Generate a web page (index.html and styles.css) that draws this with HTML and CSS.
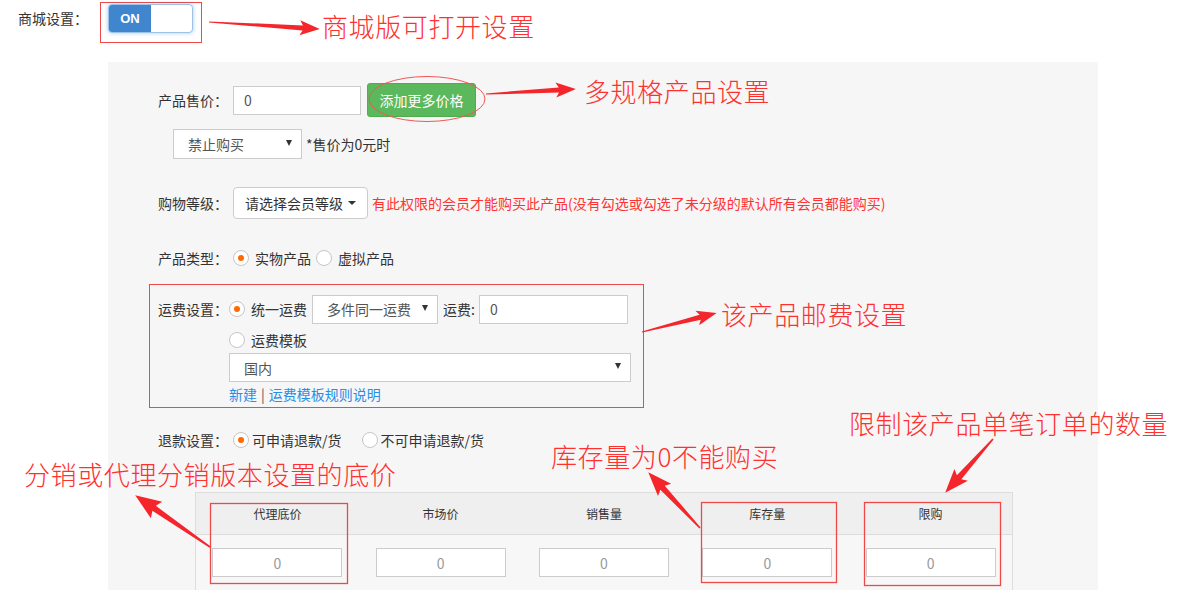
FILE: index.html
```html
<!DOCTYPE html>
<html lang="zh-CN">
<head>
<meta charset="UTF-8">
<meta name="viewport" content="width=device-width, initial-scale=1.0">
<title>商品设置</title>
<link rel="stylesheet" href="styles.css">
</head>
<body>
<div class="page">

  <div class="mall-row">
    <span class="mall-label">商城设置：</span>
    <div class="toggle-frame">
      <div class="switch"><span class="switch-on">ON</span><span class="switch-off"></span></div>
    </div>
  </div>

  <div class="panel">
    <div class="row price-row">
      <span class="field-label">产品售价：</span>
      <div class="text-input price-input">0</div>
      <div class="btn-green">添加更多价格</div>
    </div>

    <div class="row zero-row">
      <div class="fake-select zero-select"><span>禁止购买</span><i class="tri"></i></div>
      <span class="zero-note">*售价为0元时</span>
    </div>

    <div class="row level-row">
      <span class="field-label">购物等级：</span>
      <div class="level-btn">请选择会员等级 <i class="caret"></i></div>
      <span class="hint">有此权限的会员才能购买此产品(没有勾选或勾选了未分级的默认所有会员都能购买)</span>
    </div>

    <div class="row type-row">
      <span class="field-label">产品类型：</span>
      <span class="radio checked"></span><span class="opt">实物产品</span>
      <span class="radio"></span><span class="opt">虚拟产品</span>
    </div>

    <div class="ship-box">
      <div class="ship-line ship-first">
        <span class="ship-label">运费设置：</span>
        <span class="radio checked"></span><span class="opt">统一运费</span>
        <div class="fake-select fee-select"><span>多件同一运费</span><i class="tri"></i></div>
        <span class="fee-label">运费:</span>
        <div class="text-input fee-input">0</div>
      </div>
      <div class="ship-line ship-indent ship-second">
        <span class="radio"></span><span class="opt">运费模板</span>
      </div>
      <div class="ship-line ship-indent ship-third">
        <div class="fake-select tpl-select"><span>国内</span><i class="tri"></i></div>
      </div>
      <div class="ship-line ship-indent ship-links">
        <a href="#" class="link">新建</a><span class="sep">|</span><a href="#" class="link">运费模板规则说明</a>
      </div>
    </div>

    <div class="row refund-row">
      <span class="field-label">退款设置：</span>
      <span class="radio checked tight"></span><span class="opt wide">可申请退款/货</span>
      <span class="radio tight"></span><span class="opt">不可申请退款/货</span>
    </div>

    <table class="spec-table">
      <thead>
        <tr><th>代理底价</th><th>市场价</th><th>销售量</th><th>库存量</th><th>限购</th></tr>
      </thead>
      <tbody>
        <tr>
          <td><div class="cell-input">0</div></td>
          <td><div class="cell-input">0</div></td>
          <td><div class="cell-input">0</div></td>
          <td><div class="cell-input">0</div></td>
          <td><div class="cell-input">0</div></td>
        </tr>
      </tbody>
    </table>
  </div>

  <!-- annotation marks drawn over the form -->
  <svg class="marks" width="1200" height="598" viewBox="0 0 1200 598">
    <ellipse cx="427" cy="99" rx="58" ry="22.5" fill="none" stroke="#f25656" stroke-width="1"/>
    <rect x="210.5" y="503.5" width="137" height="80" fill="none" stroke="#f04848" stroke-width="1.3"/>
    <rect x="701.5" y="502.5" width="135" height="80" fill="none" stroke="#f04848" stroke-width="1.3"/>
    <rect x="864.5" y="502.5" width="136" height="83" fill="none" stroke="#f04848" stroke-width="1.3"/>
    <g fill="#f5262b">
      <polygon transform="translate(209 22) rotate(3.6)" points="0,-0.6 94,-2.5 91,-7.5 111,0 91,7.5 94,2.5 0,0.6"/>
      <polygon transform="translate(486 94) rotate(-3.2)" points="0,-0.6 73,-2.5 70,-7.5 90,0 70,7.5 73,2.5 0,0.6"/>
      <polygon transform="translate(642 332) rotate(-14.2)" points="0,-0.6 60,-2.5 57,-7.5 77,0 57,7.5 60,2.5 0,0.6"/>
      <polygon transform="translate(210 547) rotate(-145.3)" points="0,-0.8 68,-3 65,-10 91,0 65,10 68,3 0,0.8"/>
      <polygon transform="translate(700 528) rotate(-132.9)" points="0,-0.8 55,-3 52,-9 76,0 52,9 55,3 0,0.8"/>
      <polygon transform="translate(993 439) rotate(131.6)" points="0,-0.8 51,-3 48,-9 72,0 48,9 51,3 0,0.8"/>
    </g>
  </svg>

  <span class="note note-mall">商城版可打开设置</span>
  <span class="note note-spec">多规格产品设置</span>
  <span class="note note-ship">该产品邮费设置</span>
  <span class="note note-agent">分销或代理分销版本设置的底价</span>
  <span class="note note-stock">库存量为0不能购买</span>
  <span class="note note-limit">限制该产品单笔订单的数量</span>
</div>
</body>
</html>
```

FILE: styles.css
```css
body {
  margin: 0;
  font-family: "Noto Sans CJK SC", "Microsoft YaHei", sans-serif;
  font-size: 14px;
  color: #333;
  background: #fff;
}

.page {
  position: relative;
  width: 1200px;
  height: 598px;
  overflow: hidden;
}

/* top switch */
.mall-row {
  display: flex;
  align-items: flex-start;
  height: 62px;
  padding-left: 18px;
}

.mall-label {
  width: 82px;
  line-height: 20px;
  margin-top: 8px;
}

.toggle-frame {
  margin-top: 2px;
  border: 1px solid #f04848;
  padding: 1px 8px 9px 7px;
}

.switch {
  display: flex;
  width: 85px;
  height: 29px;
  box-sizing: border-box;
  border: 1px solid #9cc2ea;
  border-radius: 4px;
  overflow: hidden;
  background: #fff;
  box-shadow: 0 0 4px rgba(66, 139, 202, 0.45);
}

.switch-on {
  width: 42px;
  background: #3f86cf;
  color: #fff;
  font-family: "Liberation Sans", Arial, sans-serif;
  font-weight: bold;
  font-size: 13px;
  display: flex;
  align-items: center;
  justify-content: center;
}

/* grey panel */
.panel {
  margin-left: 108px;
  width: 990px;
  height: 528px;
  box-sizing: border-box;
  padding-top: 21px;
  background: #f6f6f6;
  overflow: hidden;
}

.row {
  display: flex;
  align-items: center;
  padding-left: 50px;
  white-space: nowrap;
}

.field-label {
  width: 70px;
  margin-right: 5px;
}

.text-input {
  box-sizing: border-box;
  height: 29px;
  border: 1px solid #ccc;
  background: #fff;
  padding: 0 10px;
  display: flex;
  align-items: center;
  color: #555;
}

.price-row {
  height: 34px;
}

.price-input {
  width: 128px;
  margin-right: 6px;
}

.btn-green {
  box-sizing: border-box;
  width: 109px;
  height: 34px;
  background: #5cb85c;
  border: 1px solid #4cae4c;
  border-radius: 3px;
  color: #fff;
  display: flex;
  align-items: center;
  justify-content: center;
}

.fake-select {
  box-sizing: border-box;
  height: 30px;
  border: 1px solid #ccc;
  background: #fff;
  display: flex;
  align-items: center;
  justify-content: space-between;
  padding: 0 9px 0 14px;
  color: #555;
}

.tri {
  width: 0;
  height: 0;
  border-left: 3.5px solid transparent;
  border-right: 3.5px solid transparent;
  border-top: 6px solid #333;
  margin-top: -3px;
}

.zero-row {
  margin-top: 12px;
  padding-left: 65px;
  height: 30px;
}

.zero-select {
  width: 129px;
}

.zero-note {
  margin-left: 4px;
}

.level-row {
  margin-top: 28px;
  height: 32px;
}

.level-btn {
  box-sizing: border-box;
  width: 135px;
  height: 32px;
  border: 1px solid #ccc;
  border-radius: 4px;
  background: #fff;
  display: flex;
  align-items: center;
  justify-content: center;
  gap: 5px;
}

.caret {
  width: 0;
  height: 0;
  border-left: 4px solid transparent;
  border-right: 4px solid transparent;
  border-top: 4px solid #333;
}

.hint {
  color: #f33;
  margin-left: 4px;
}

.type-row {
  margin-top: 29px;
  height: 20px;
}

.radio {
  box-sizing: border-box;
  width: 16px;
  height: 16px;
  border: 1px solid #c6c6c6;
  border-radius: 50%;
  background: #fff;
  display: flex;
  align-items: center;
  justify-content: center;
  margin-right: 6px;
  flex-shrink: 0;
}

.radio.checked::after {
  content: "";
  width: 6px;
  height: 6px;
  border-radius: 50%;
  background: #ff6a00;
}

.radio.tight {
  margin-right: 3px;
}

.opt {
  margin-right: 5px;
}

.opt.wide {
  margin-right: 20px;
}

/* shipping block */
.ship-box {
  margin: 16px 0 0 41px;
  width: 495px;
  height: 124px;
  box-sizing: border-box;
  border: 1px solid #f04848;
  padding: 9px 0 0 8px;
  white-space: nowrap;
}

.ship-line {
  display: flex;
  align-items: center;
}

.ship-first {
  height: 30px;
}

.ship-label {
  width: 71px;
}

.fee-select {
  width: 126px;
  height: 29px;
  margin-right: 5px;
}

.fee-label {
  margin-right: 4px;
}

.fee-input {
  width: 149px;
}

.ship-indent {
  padding-left: 71px;
}

.ship-second {
  margin-top: 7px;
  height: 18px;
}

.ship-third {
  margin-top: 4px;
}

.tpl-select {
  width: 402px;
  height: 29px;
}

.ship-links {
  margin-top: 2px;
  line-height: 20px;
}

.link {
  color: #2a8ee6;
  text-decoration: none;
}

.sep {
  color: #555;
  margin: 0 4px;
}

.refund-row {
  margin-top: 22px;
  height: 20px;
}

/* spec table */
.spec-table {
  margin: 42px 0 0 87px;
  width: 818px;
  border-collapse: collapse;
  table-layout: fixed;
  border-left: 1px solid #ddd;
  border-right: 1px solid #ddd;
}

.spec-table th {
  height: 41px;
  padding: 0;
  background: #efefef;
  border-top: 1px solid #ddd;
  border-bottom: 1px solid #ddd;
  font-weight: normal;
  font-size: 12px;
  color: #333;
}

.spec-table td {
  height: 55px;
  padding: 0;
  background: #f7f7f7;
}

.cell-input {
  box-sizing: border-box;
  width: 130px;
  height: 29px;
  margin: 0 auto;
  border: 1px solid #ccc;
  background: #fff;
  color: #999;
  display: flex;
  align-items: center;
  justify-content: center;
}

/* annotations */
.marks {
  position: absolute;
  left: 0;
  top: 0;
  pointer-events: none;
}

.note {
  position: absolute;
  color: #ff3030;
  font-size: 26px;
  line-height: 26px;
  letter-spacing: 0.6px;
  font-weight: 300;
  white-space: nowrap;
}

.note-mall { left: 322px; top: 13px; }
.note-spec { left: 584px; top: 78px; }
.note-ship { left: 721px; top: 301px; }
.note-agent { left: 24px; top: 461px; }
.note-stock { left: 551px; top: 443px; }
.note-limit { left: 849px; top: 410px; }
```
